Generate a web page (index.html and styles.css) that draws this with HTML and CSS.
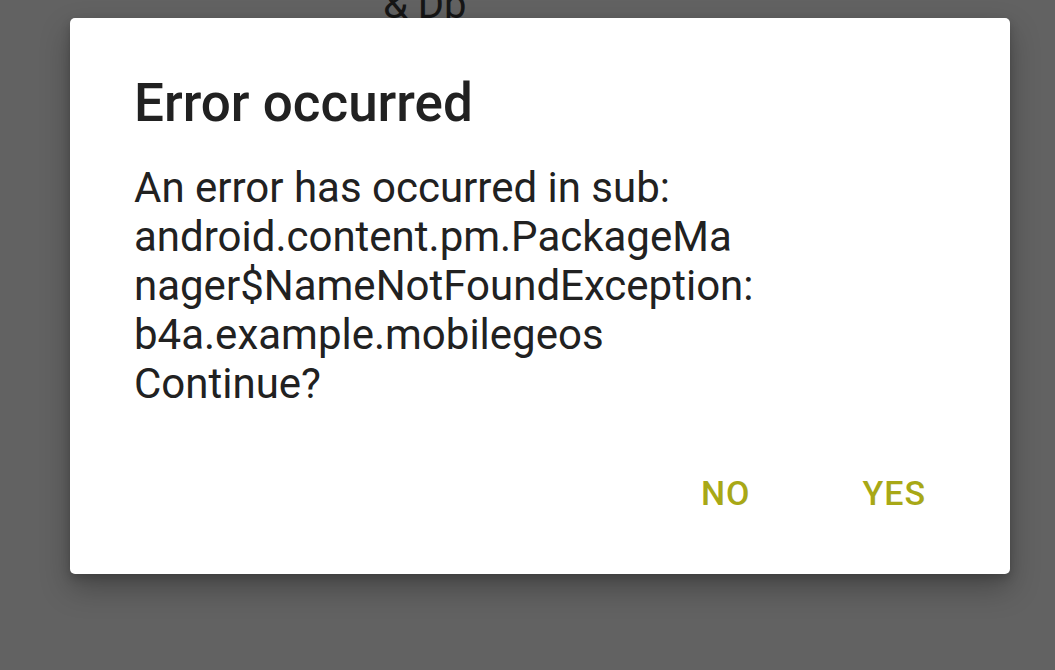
FILE: index.html
```html
<!DOCTYPE html>
<html>
<head>
<meta charset="utf-8">
<link rel="stylesheet" href="styles.css">
</head>
<body>
<div class="screen">
  <div class="behind">&amp; Db</div>
  <div class="dialog">
    <h1 class="title">Error occurred</h1>
    <div class="message">
      <div class="line">An error has occurred in sub:</div>
      <div class="line">android.content.pm.PackageMa</div>
      <div class="line">nager$NameNotFoundException:</div>
      <div class="line">b4a.example.mobilegeos</div>
      <div class="line">Continue?</div>
    </div>
    <div class="actions">
      <span class="btn">NO</span>
      <span class="btn">YES</span>
    </div>
  </div>
</div>
</body>
</html>
```

FILE: styles.css
```css
html, body {
  margin: 0;
  padding: 0;
  background: #626262;
}
.screen {
  width: 1055px;
  height: 670px;
  position: relative;
  overflow: hidden;
  background: #626262;
  font-family: Roboto, "Noto Sans", sans-serif;
}
.behind {
  position: absolute;
  left: 383px;
  top: -18px;
  font-size: 40px;
  line-height: 46px;
  color: #161616;
}
.dialog {
  position: absolute;
  left: 70px;
  top: 18px;
  width: 940px;
  height: 556px;
  box-sizing: border-box;
  background: #ffffff;
  border-radius: 5px;
  box-shadow: 0 14px 30px rgba(0, 0, 0, 0.28), 0 4px 10px rgba(0, 0, 0, 0.18);
  padding: 55px 84px 0 64px;
  display: flex;
  flex-direction: column;
}
.title {
  margin: 0;
  font-size: 53px;
  line-height: 60px;
  font-weight: 500;
  color: #212121;
}
.message {
  margin-top: 30px;
  font-size: 42px;
  line-height: 49px;
  color: #212121;
}
.line {
  white-space: nowrap;
}
.actions {
  margin-top: 65px;
  display: flex;
  justify-content: flex-end;
  gap: 112px;
  font-size: 34px;
  line-height: 40px;
  font-weight: 500;
  letter-spacing: 1px;
  color: #a8a816;
}
```
